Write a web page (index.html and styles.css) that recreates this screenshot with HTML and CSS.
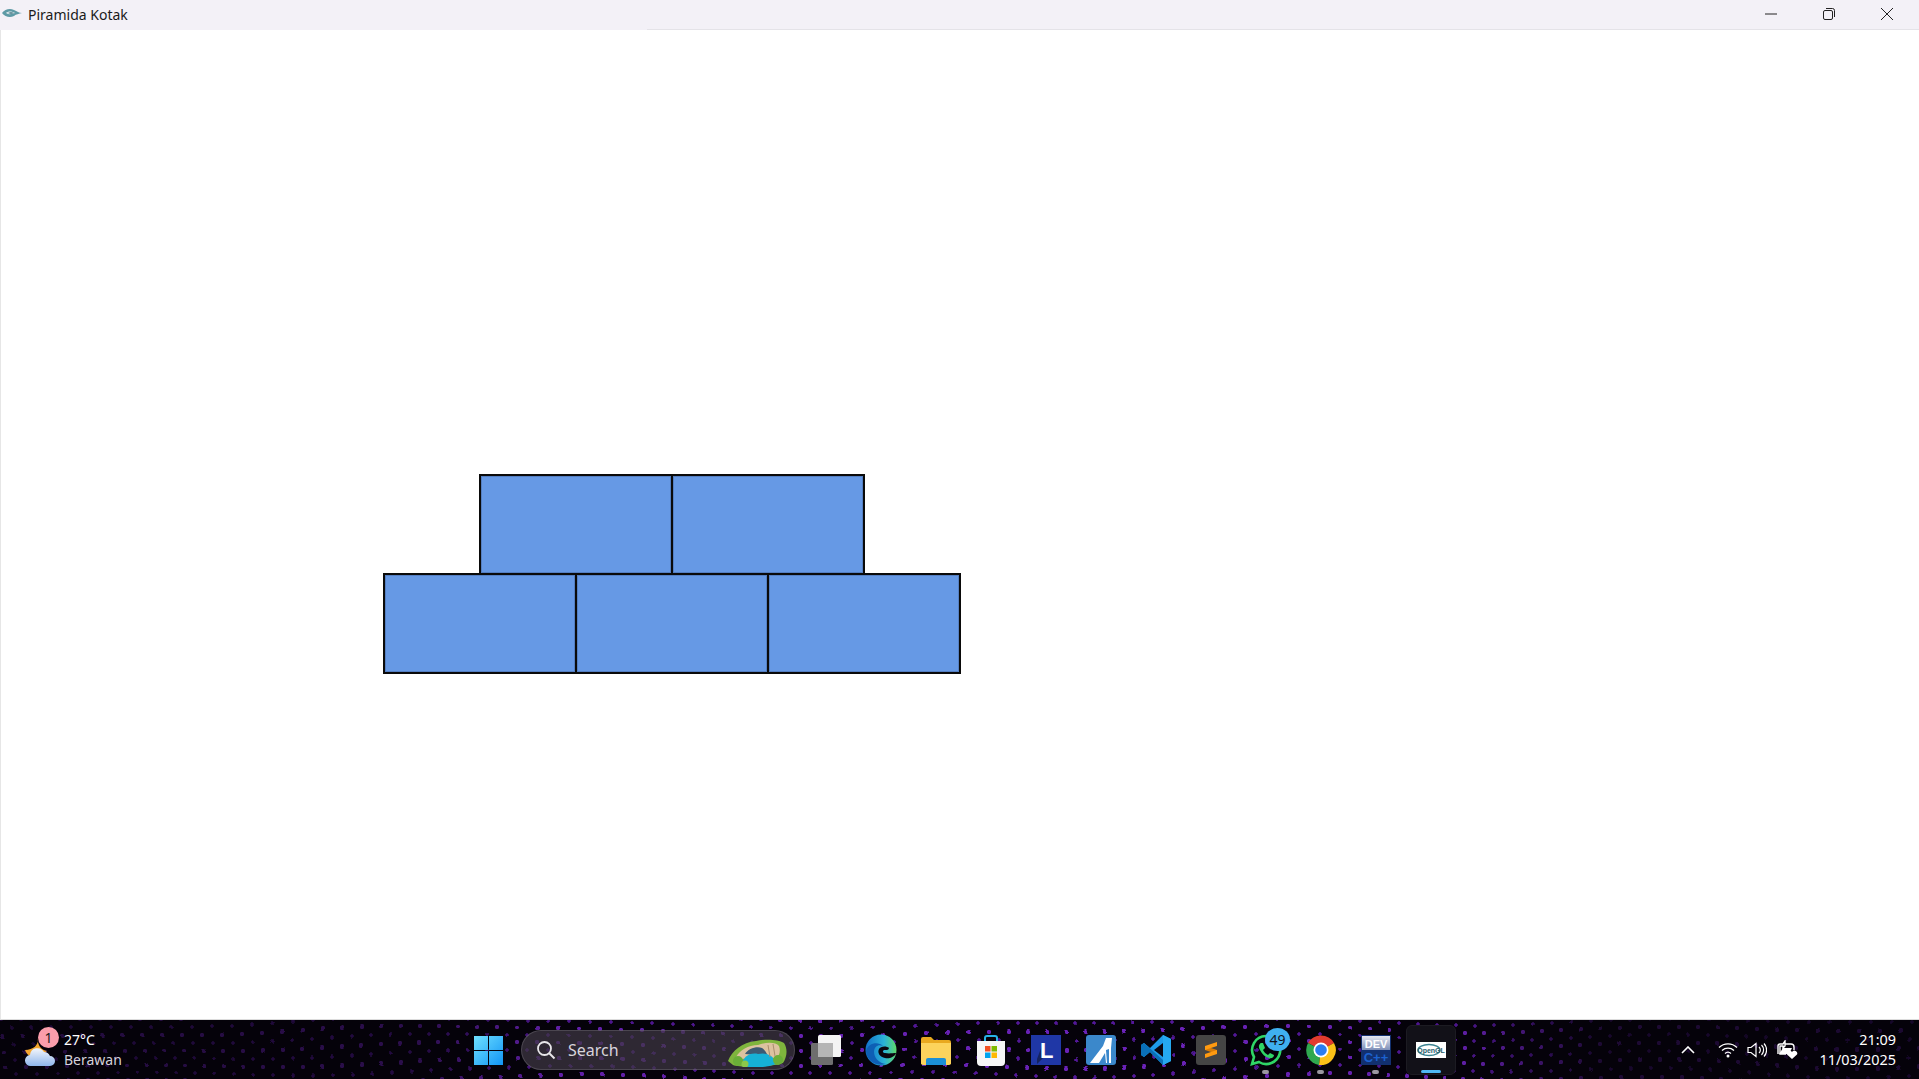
FILE: index.html
```html
<!DOCTYPE html>
<html lang="id">
<head>
<meta charset="utf-8">
<title>Piramida Kotak</title>
<link rel="stylesheet" href="styles.css">
</head>
<body>
<svg class="defs" width="0" height="0"><defs>
  <filter id="wave" x="0" y="0" width="100%" height="100%"><feTurbulence type="fractalNoise" baseFrequency="0.004 0.01" numOctaves="1" seed="7"/><feDisplacementMap in="SourceGraphic" scale="30" xChannelSelector="R" yChannelSelector="G"/></filter>
  <linearGradient id="cl" x1="0" y1="0" x2="0" y2="1"><stop offset="0" stop-color="#f4f6fb"/><stop offset="1" stop-color="#8fb6ec"/></linearGradient>
  <linearGradient id="win" x1="0" y1="0" x2="1" y2="1"><stop offset="0" stop-color="#6fe0ff"/><stop offset="1" stop-color="#1194f5"/></linearGradient>
  <linearGradient id="edge" x1="0" y1="0" x2="1" y2="0"><stop offset="0" stop-color="#1170c9"/><stop offset=".6" stop-color="#2ab3d8"/><stop offset="1" stop-color="#5ed96a"/></linearGradient>
  <linearGradient id="devtop" x1="0" y1="0" x2="0" y2="1"><stop offset="0" stop-color="#e4e7f0"/><stop offset="1" stop-color="#7d8fb8"/></linearGradient>
</defs></svg>
<div class="window">
  <header class="titlebar">
    <svg class="app-icon" viewBox="0 0 20 10"><path d="M0 5C3 1 8 0 12 2c3 1 5 3 8 3-3 1-6 1-8 3-4 2-9 1-12-3z" fill="#5d9aa5"/><path d="M4 5c2-2 6-2 9 0-3 1-6 2-9 0z" fill="#dfe9ec"/><path d="M6 5c2-1 4-1 6 0-2 1-4 1-6 0z" fill="#38707d"/></svg>
    <span class="title">Piramida Kotak</span>
    <div class="controls">
      <svg class="ctl" viewBox="0 0 12 12"><path d="M0 6h12" stroke="#222" stroke-width="1" fill="none"/></svg>
      <svg class="ctl" viewBox="0 0 12 12"><rect x=".5" y="2.5" width="9" height="9" rx="1.5" stroke="#222" fill="none"/><path d="M3 .5h6.5a2 2 0 0 1 2 2V9" stroke="#222" fill="none"/></svg>
      <svg class="ctl" viewBox="0 0 12 12"><path d="M0 0l12 12M12 0L0 12" stroke="#222" stroke-width="1" fill="none"/></svg>
    </div>
  </header>
  <main class="canvas">
    <div class="pyramid">
      <div class="row"><div class="box"></div><div class="box"></div></div>
      <div class="row"><div class="box"></div><div class="box"></div><div class="box"></div></div>
    </div>
  </main>
  <footer class="taskbar">
    <div class="wallpaper"></div>
    <div class="weather">
      <div class="weather-icon">
        <svg viewBox="0 0 30 30" width="30" height="30"><path d="M0 13a10 10 0 0 0 16 5l6-4A11 11 0 0 1 13 1C14 8 8 13 0 13z" fill="#f3a52f"/><path d="M6 29a5.500 5.500 0 0 1-1-11 7.500 7.500 0 0 1 14-3 7 7 0 0 1 6 4 5 5 0 0 1 0 10z" fill="url(#cl)"/></svg>
        <span class="badge">1</span>
      </div>
      <div class="weather-text"><span class="temp">27°C</span><span class="cond">Berawan</span></div>
    </div>
    <div class="tile start">
      <svg viewBox="0 0 29 29" width="29" height="29"><path d="M0 0h14v14H0zM15 0h14v14H15zM0 15h14v14H0zM15 15h14v14H15z" fill="url(#win)"/></svg>
    </div>
    <div class="search">
      <svg class="search-glyph" viewBox="0 0 20 20" width="20" height="20"><circle cx="8.500" cy="8.500" r="6.500" stroke="#e8e6ea" stroke-width="1.800" fill="none"/><path d="M13 13l5.500 5.500" stroke="#e8e6ea" stroke-width="2" fill="none"/></svg>
      <span class="search-text">Search</span>
      <svg class="cave" viewBox="0 0 60 28" width="60" height="28"><path d="M0 22C4 12 14 3 28 2c8-2 22-2 28 2 4 6 3 14-1 20-10 4-43 5-50 2z" fill="#7fb53d"/><path d="M8 18C12 11 20 6 30 6c8-3 18-3 21 1 2 5 0 10-2 12L8 20z" fill="#dcc2a0"/><path d="M17 15c3-5 11-8 17-6 4 3 5 6 6 8z" fill="#3c5a73"/><path d="M14 27c0-9 8-14 16-12 8-2 16 1 18 10-10 4-24 4-34 2z" fill="#16b1d6"/><circle cx="10" cy="22" r="5" fill="#6aae38"/><circle cx="17" cy="25" r="3.500" fill="#8cc84a"/><circle cx="50" cy="21" r="5" fill="#6aae38"/><path d="M40 6l2 12M45 5l2 12" stroke="#a98d6d" fill="none"/></svg>
    </div>
    <div class="apps">
      <div class="tile"><svg viewBox="0 0 32 32" width="32" height="32"><rect x="1" y="9" width="22" height="22" rx="1.500" fill="#6e6e6e"/><rect x="8" y="1" width="23" height="22" rx="1.500" fill="#f4f4f4"/><rect x="8" y="9" width="15" height="14" fill="#b5b5b5"/></svg></div>
      <div class="tile"><svg viewBox="0 0 32 32" width="32" height="32"><circle cx="16" cy="16" r="15.500" fill="url(#edge)"/><path d="M31 19c-1 4-7 6-11 5-5-1-8-5-6-9 1-2 5-3 8-2 3 0 2 3 0 3h-3c-2 1-1 3 1 3 4 1 8 0 11 0z" fill="#0b0710"/><path d="M1 17C3 9 13 7 18 12c-5-2-9 1-9 6 0 5 4 11 12 12C11 33 2 27 1 17z" fill="#0e5fb5"/></svg></div>
      <div class="tile"><svg viewBox="0 0 32 32" width="32" height="32"><path d="M1 5a2 2 0 0 1 2-2h8l3 3h15a2 2 0 0 1 2 2v22H1z" fill="#e9a91f"/><path d="M1 9h30v20a2 2 0 0 1-2 2H3a2 2 0 0 1-2-2z" fill="#fcd35c"/><path d="M8 24h16a2 2 0 0 1 2 2v5H6v-5a2 2 0 0 1 2-2z" fill="#1b8fd6"/></svg></div>
      <div class="tile"><svg viewBox="0 0 32 32" width="32" height="32"><path d="M10 8V4a2 2 0 0 1 2-2h8a2 2 0 0 1 2 2v4" stroke="#27b4e8" stroke-width="2" fill="none"/><path d="M2 7h28v21a4 4 0 0 1-4 4H6a4 4 0 0 1-4-4z" fill="#f6f6f6"/><path d="M10 12h5.500v5.500H10z" fill="#f25022"/><path d="M16.500 12H22v5.500h-5.500z" fill="#7fba00"/><path d="M10 18.500h5.500V24H10z" fill="#00a4ef"/><path d="M16.500 18.500H22V24h-5.500z" fill="#ffb900"/></svg></div>
      <div class="tile"><svg viewBox="0 0 30 30" width="30" height="30"><rect width="30" height="30" fill="#1f37a6"/><path d="M6 29l6-6V8l-6 16z" fill="#15235f"/><text x="9" y="23" class="logo-l">L</text></svg></div>
      <div class="tile"><svg viewBox="0 0 30 30" width="30" height="30"><rect width="30" height="30" rx="3" fill="#3b88cb"/><path d="M4 28L17 11l3-8h6l-1 10v15h-5l-1-10-6 10z" fill="#fff"/><path d="M20 15l3-1v14h-2z" fill="#3b88cb"/></svg></div>
      <div class="tile"><svg viewBox="0 0 32 32" width="32" height="32"><path d="M23 1l8 4v22l-8 4-13-13-6 5-3-2v-10l3-2 6 5z" fill="#1e9be8"/><path d="M23 9l-9 7 9 7z" fill="#0b0710"/><path d="M23 1l8 4v22l-8 4z" fill="#25a9f0"/><path d="M1 11l3-2 19 17v5l-13-13-6 5-3-2z" fill="#0a70b8"/></svg></div>
      <div class="tile"><svg viewBox="0 0 30 30" width="30" height="30"><rect width="30" height="30" rx="3" fill="#454545"/><path d="M9 11l12 4v4L9 15z" fill="#d97c06"/><path d="M21 7L9 11v4l12-4zM21 15L9 19v4l12-4z" fill="#ff9a10"/></svg></div>
      <div class="tile running"><svg viewBox="0 0 32 32" width="32" height="32"><path d="M16 2a14 14 0 0 0-12 21L2 30l7-2a14 14 0 1 0 7-26z" fill="none" stroke="#2fd566" stroke-width="2.600"/><path d="M11 9c-2 1-3 4-1 7 2 4 5 7 9 8 3 1 5-1 5-3l-4-2-2 2c-2-1-4-3-5-5l2-2-2-5z" fill="#2fd566"/></svg><span class="count">49</span></div>
      <div class="tile running"><svg viewBox="0 0 30 30" width="30" height="30"><path d="M15 15L2 8A15 15 0 0 1 28 8z" fill="#e33b2e"/><path d="M15 15L2 8a15 15 0 0 0 11 22z" fill="#2fa84f"/><path d="M15 15l13-7a15 15 0 0 1-15 22z" fill="#fbc118"/><circle cx="15" cy="15" r="7.500" fill="#fff"/><circle cx="15" cy="15" r="5.800" fill="#2a7df0"/></svg></div>
      <div class="tile running"><svg viewBox="0 0 30 30" width="30" height="30"><rect width="30" height="30" fill="#12306f"/><rect x="1" y="1" width="28" height="14" fill="url(#devtop)"/><text x="15" y="13" class="logo-dev">DEV</text><text x="15" y="27" class="logo-cpp">C++</text></svg></div>
      <div class="tile active"><svg viewBox="0 0 30 16" width="30" height="16"><rect width="30" height="16" fill="#fff"/><ellipse cx="13" cy="8" rx="11" ry="5.500" fill="none" stroke="#3b8391" stroke-width="1.500"/><text x="15" y="11" class="logo-gl">OpenGL</text></svg></div>
    </div>
    <div class="tray">
      <svg class="tray-icon chevron" viewBox="0 0 14 8" width="14" height="8"><path d="M1 7l6-6 6 6" stroke="#fff" stroke-width="1.600" fill="none"/></svg>
      <svg class="tray-icon" viewBox="0 0 20 16" width="20" height="16"><path d="M1 5.500a13 13 0 0 1 18 0M4 8.500a9 9 0 0 1 12 0M7 11.500a4.500 4.500 0 0 1 6 0" stroke="#fff" stroke-width="1.300" fill="none"/><circle cx="10" cy="14" r="1.500" fill="#fff"/></svg>
      <svg class="tray-icon" viewBox="0 0 20 16" width="20" height="16"><path d="M1 5.500h3L9 1.500v13l-5-4H1z" stroke="#fff" stroke-width="1.200" fill="none"/><path d="M12 5a4 4 0 0 1 0 6M14.500 3a7 7 0 0 1 0 10M17 1.500a9.500 9.500 0 0 1 0 13" stroke="#fff" stroke-width="1.200" fill="none"/></svg>
      <svg class="tray-icon" viewBox="0 0 22 20" width="22" height="20"><path d="M2 14V6a2 2 0 0 1 2-2h3l2-3v5l-2 2v-2H4v8h6" stroke="#fff" stroke-width="1.400" fill="none"/><path d="M9 4h6a3 3 0 0 1 3 3v3" stroke="#fff" stroke-width="1.400" fill="none"/><path d="M3 14l4-6h9l-3 6z" fill="#fff"/><path d="M16 19l-5-4.500a2.800 2.800 0 0 1 5-2.500 2.800 2.800 0 0 1 5 2.500z" fill="#fff"/></svg>
      <div class="clock"><span>21:09</span><span>11/03/2025</span></div>
    </div>
  </footer>
</div>
</body>
</html>
```

FILE: styles.css
```css
* { box-sizing: border-box; }
html, body { margin: 0; height: 100%; overflow: hidden; }
body { font-family: "Noto Sans", "Open Sans", sans-serif; background: #fff; }

.defs { position: absolute; }
.window { display: flex; flex-direction: column; height: 100vh; }

.titlebar {
  position: relative;
  flex: 0 0 30px;
  display: flex;
  align-items: center;
  background: #f3f1f7;
  padding: 0 0 2px 2px;
}
.titlebar::after {
  content: "";
  position: absolute;
  left: 647px;
  right: 0;
  bottom: 0;
  height: 1px;
  background: #e4e3e8;
}
.app-icon { width: 20px; height: 10px; margin-top: -2px; }
.title { margin-left: 6px; font-size: 14px; color: #1a1a1a; }
.controls { margin-left: auto; display: flex; align-items: center; padding-right: 26px; }
.ctl { width: 12px; height: 12px; margin-left: 46px; display: block; }

.canvas {
  flex: 1;
  background: #fff;
  border-left: 1px solid #e6e6e6;
  border-bottom: 1px solid #dcdcdc;
  padding: 444px 0 0 382px;
}
.pyramid { display: inline-flex; flex-direction: column; align-items: center; }
.row { display: flex; padding-right: 2px; }
.row + .row { margin-top: -2px; }
.box {
  width: 194px;
  height: 101px;
  margin-right: -2px;
  background: #6699e5;
  border: 2px solid #0a0a0a;
  box-shadow: inset 0 0 0 1px rgba(30, 50, 90, .25);
}

.taskbar {
  position: relative;
  flex: 0 0 59px;
  display: flex;
  align-items: center;
  color: #fff;
  background-color: #05020a;
  overflow: hidden;
}
.wallpaper {
  position: absolute;
  inset: -30px;
  background-image:
    radial-gradient(circle, #6a20b8 0 1.8px, transparent 2.5px),
    radial-gradient(circle, #55189c 0 1.4px, transparent 2.1px);
  background-size: 20px 16px, 20px 16px;
  background-position: 3px 2px, 13px 10px;
  filter: url(#wave);
}
.taskbar::before {
  content: "";
  position: absolute;
  inset: 0;
  z-index: 1;
  background: linear-gradient(90deg, rgba(5,2,10,.72) 0, rgba(5,2,10,.62) 420px, rgba(5,2,10,.1) 560px, rgba(5,2,10,0) 1150px, rgba(5,2,10,.1) 1460px, rgba(5,2,10,.76) 1600px, rgba(5,2,10,.78) 100%);
}
.taskbar > div:not(.wallpaper) { position: relative; z-index: 2; }

.weather { flex: 0 0 461px; display: flex; align-items: center; padding-left: 25px; }
.weather-icon { position: relative; width: 30px; height: 30px; margin-top: 4px; }
.weather-icon svg { display: block; }
.badge {
  position: absolute;
  left: 13px;
  top: -10px;
  width: 21px;
  height: 21px;
  border-radius: 50%;
  background: #fb9dab;
  color: #1b1b1b;
  font-size: 14px;
  line-height: 21px;
  text-align: center;
}
.weather-text { display: flex; flex-direction: column; margin-left: 9px; font-size: 14px; line-height: 20px; }
.temp { color: #fff; }
.cond { color: #d5d2da; }

.tile { position: relative; flex: 0 0 55px; height: 59px; display: flex; align-items: center; justify-content: center; }
.tile svg { display: block; }
.start { margin-top: 1px; }

.search {
  flex: 0 0 274px;
  height: 40px;
  margin: 0 3px 0 5px;
  padding: 0 6px 0 14px;
  display: flex;
  align-items: center;
  border-radius: 20px;
  background: rgba(62, 56, 68, .72);
  border: 1px solid rgba(255, 255, 255, .14);
}
.search-text { margin-left: 12px; font-size: 16px; color: #d8d4dc; }
.cave { margin-left: auto; margin-top: 6px; }

.apps { display: flex; }
.running::after {
  content: "";
  position: absolute;
  left: 24px;
  bottom: 5px;
  width: 7px;
  height: 4px;
  border-radius: 2px;
  background: #9a97a0;
}
.count {
  position: absolute;
  left: 27px;
  top: 8px;
  width: 25px;
  height: 23px;
  border-radius: 50%;
  background: #3fb0f0;
  color: #101018;
  font-size: 14px;
  line-height: 23px;
  text-align: center;
}
.active { flex: 0 0 50px; height: 50px; margin: 5px 2.500px 4px; border-radius: 6px; background: #121118; border: 1px solid #1c1b22; }
.active::after {
  content: "";
  position: absolute;
  left: 14px;
  bottom: 1px;
  width: 20px;
  height: 3.500px;
  border-radius: 2px;
  background: #4fb8f5;
}
.logo-l { font: 700 22px "Liberation Sans", sans-serif; fill: #fff; }
.logo-dev { font: 700 11px "Liberation Sans", sans-serif; fill: #fff; text-anchor: middle; }
.logo-cpp { font: 700 13px "Liberation Sans", sans-serif; fill: #1c62d0; text-anchor: middle; }
.logo-gl { font: 700 7px "Liberation Sans", sans-serif; fill: #26606e; text-anchor: middle; }

.tray { margin-left: auto; display: flex; align-items: center; padding-right: 23px; }
.tray-icon { display: block; margin-left: 9px; }
.chevron { margin-right: 14px; }
.clock { display: flex; flex-direction: column; align-items: flex-end; margin-left: 21px; font-size: 14.400px; line-height: 20px; color: #fff; }
```
